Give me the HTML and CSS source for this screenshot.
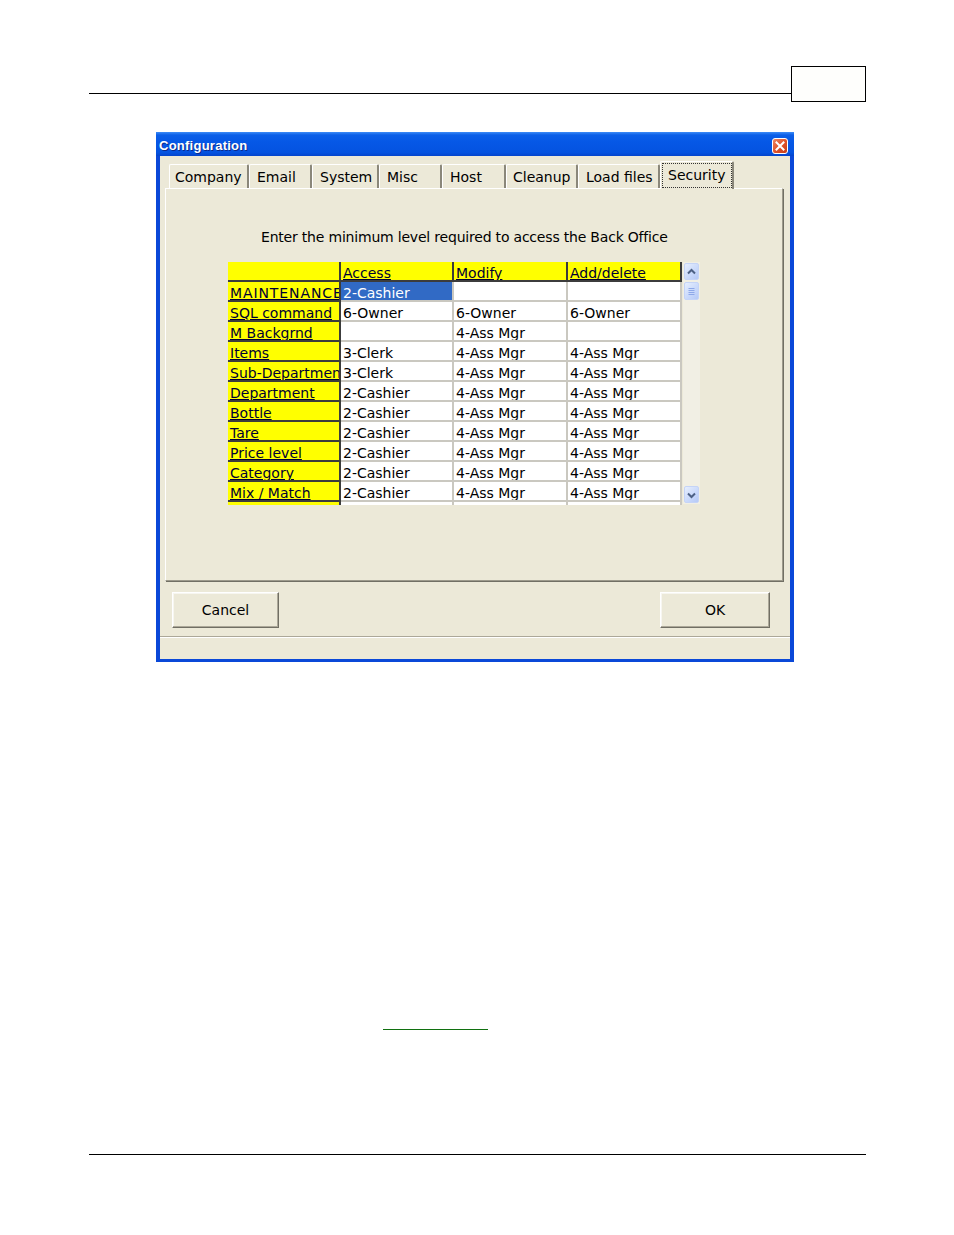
FILE: index.html
```html
<!DOCTYPE html>
<html>
<head>
<meta charset="utf-8">
<title>Configuration</title>
<link rel="stylesheet" href="styles.css">
</head>
<body>
<div class="page">
  <header class="doc-head">
    <div class="head-line"></div>
    <div class="head-box"></div>
  </header>

  <div class="dialog">
    <div class="titlebar">
      <span class="title">Configuration</span>
      <span class="close">
        <svg width="16" height="16" viewBox="0 0 16 16">
          <defs>
            <linearGradient id="cg" x1="0" y1="0" x2="1" y2="1">
              <stop offset="0" stop-color="#f08a66"/>
              <stop offset="0.5" stop-color="#e0542c"/>
              <stop offset="1" stop-color="#c23b16"/>
            </linearGradient>
          </defs>
          <rect x="0.5" y="0.5" width="15" height="15" rx="2.5" fill="url(#cg)" stroke="#fff"/>
          <path d="M4.5 4.5l7 7M11.5 4.5l-7 7" stroke="#fff" stroke-width="2" stroke-linecap="square"/>
        </svg>
      </span>
    </div>

    <div class="dlg-body">
      <div class="tabs">
        <div class="tab">Company</div>
        <div class="tab">Email</div>
        <div class="tab">System</div>
        <div class="tab">Misc</div>
        <div class="tab">Host</div>
        <div class="tab">Cleanup</div>
        <div class="tab">Load files</div>
        <div class="tab tab-active"><span class="focus">Security</span></div>
      </div>

      <div class="panel">
        <p class="prompt">Enter the minimum level required to access the Back Office</p>
        <div class="grid-wrap">
          <div class="grid">
            <div class="c fix"></div>
            <div class="c fix"><u>Access</u></div>
            <div class="c fix"><u>Modify</u></div>
            <div class="c fix"><u>Add/delete</u></div>

            <div class="c fix"><u class="wide">MAINTENANCE</u></div>
            <div class="c sel">2-Cashier</div>
            <div class="c"></div>
            <div class="c"></div>

            <div class="c fix"><u>SQL command</u></div>
            <div class="c">6-Owner</div>
            <div class="c">6-Owner</div>
            <div class="c">6-Owner</div>

            <div class="c fix"><u>M Backgrnd</u></div>
            <div class="c"></div>
            <div class="c">4-Ass Mgr</div>
            <div class="c"></div>

            <div class="c fix"><u>Items</u></div>
            <div class="c">3-Clerk</div>
            <div class="c">4-Ass Mgr</div>
            <div class="c">4-Ass Mgr</div>

            <div class="c fix"><u>Sub-Department</u></div>
            <div class="c">3-Clerk</div>
            <div class="c">4-Ass Mgr</div>
            <div class="c">4-Ass Mgr</div>

            <div class="c fix"><u>Department</u></div>
            <div class="c">2-Cashier</div>
            <div class="c">4-Ass Mgr</div>
            <div class="c">4-Ass Mgr</div>

            <div class="c fix"><u>Bottle</u></div>
            <div class="c">2-Cashier</div>
            <div class="c">4-Ass Mgr</div>
            <div class="c">4-Ass Mgr</div>

            <div class="c fix"><u>Tare</u></div>
            <div class="c">2-Cashier</div>
            <div class="c">4-Ass Mgr</div>
            <div class="c">4-Ass Mgr</div>

            <div class="c fix"><u>Price level</u></div>
            <div class="c">2-Cashier</div>
            <div class="c">4-Ass Mgr</div>
            <div class="c">4-Ass Mgr</div>

            <div class="c fix"><u>Category</u></div>
            <div class="c">2-Cashier</div>
            <div class="c">4-Ass Mgr</div>
            <div class="c">4-Ass Mgr</div>

            <div class="c fix"><u>Mix / Match</u></div>
            <div class="c">2-Cashier</div>
            <div class="c">4-Ass Mgr</div>
            <div class="c">4-Ass Mgr</div>

            <div class="c fix"></div>
            <div class="c"></div>
            <div class="c"></div>
            <div class="c"></div>
          </div>

          <div class="scrollbar">
            <div class="sb-btn">
              <svg width="15" height="16" viewBox="0 0 15 16"><path d="M4 9.5l3.5-3.5L11 9.5" fill="none" stroke="#4d6185" stroke-width="2"/></svg>
            </div>
            <div class="sb-thumb">
              <svg width="15" height="17" viewBox="0 0 15 17"><path d="M4.5 5.5h6M4.5 7.5h6M4.5 9.5h6M4.5 11.5h6" stroke="#8ea8e8" stroke-width="1"/></svg>
            </div>
            <div class="sb-btn sb-down">
              <svg width="15" height="16" viewBox="0 0 15 16"><path d="M4 6.5l3.5 3.5L11 6.5" fill="none" stroke="#4d6185" stroke-width="2"/></svg>
            </div>
          </div>
        </div>
      </div>

      <div class="buttons">
        <button class="btn btn-cancel">Cancel</button>
        <button class="btn btn-ok">OK</button>
      </div>
      <div class="separator"></div>
      <div class="status"></div>
    </div>
  </div>

  <div class="link-line"></div>
  <div class="foot-line"></div>
</div>
</body>
</html>
```

FILE: styles.css
```css
* { box-sizing: border-box; }
html, body { margin: 0; padding: 0; background: #fff; }
body {
  font-family: "DejaVu Sans", Verdana, sans-serif;
  font-size: 14px;
  color: #000;
}
.page { padding-top: 66px; height: 1235px; overflow: hidden; }

/* document header */
.doc-head { display: flex; margin-left: 89px; width: 777px; height: 36px; }
.head-line { width: 702px; height: 28px; border-bottom: 1px solid #000; }
.head-box { width: 75px; height: 36px; border: 1px solid #000; background: #fefefc; }

/* dialog */
.dialog {
  margin: 30px 0 0 156px;
  width: 638px;
  height: 530px;
  background: #0747d2;
  border-style: solid;
  border-color: #0a48d8;
  border-width: 0 4px 3px 4px;
  display: flex;
  flex-direction: column;
}
.titlebar {
  height: 24px;
  display: flex;
  align-items: flex-start;
  justify-content: space-between;
  margin: 0 -4px;
  padding: 0 6px 0 3px;
  background: linear-gradient(to bottom, #3d8cf7 0, #0b5fe8 3px, #0658e6 40%, #0453e0 85%, #0445cc 100%);
}
.title {
  margin-top: 6px;
  font-family: "Liberation Sans", Arial, sans-serif;
  font-weight: bold;
  font-size: 13px;
  letter-spacing: 0.25px;
  line-height: 16px;
  color: #fff;
  text-shadow: 1px 1px 0 #0b2a8c;
}
.close { margin-top: 6px; width: 16px; height: 16px; display: block; }
.close svg { display: block; }

.dlg-body {
  flex: 1;
  background: #ece9d8;
  display: flex;
  flex-direction: column;
}

/* tabs */
.tabs {
  height: 32px;
  display: flex;
  align-items: flex-end;
  padding-left: 9px;
}
.tab {
  height: 24px;
  padding: 1px 0 0 7px;
  line-height: 22px;
  white-space: nowrap;
  border-top: 1px solid #fff;
  border-left: 1px solid #fff;
  border-right: 2px solid #8a877a;
  border-radius: 2px 2px 0 0;
  background: #ece9d8;
}
.tab:nth-child(1) { width: 80px; padding-left: 5px; }
.tab:nth-child(2) { width: 63px; }
.tab:nth-child(3) { width: 67px; }
.tab:nth-child(4) { width: 63px; }
.tab:nth-child(5) { width: 64px; }
.tab:nth-child(6) { width: 72px; padding-left: 6px; }
.tab:nth-child(7) { width: 82px; }
.tab-active {
  width: 74px;
  height: 28px;
  padding: 2px 0 0 2px;
  margin-bottom: -1px;
  position: relative;
  z-index: 1;
}
.focus {
  display: inline-block;
  height: 23px;
  line-height: 22px;
  padding: 0 5px;
  outline: 1px dotted #333;
}

/* panel */
.panel {
  margin-left: 5px;
  width: 618px;
  height: 393px;
  border-top: 1px solid #fff;
  border-left: 1px solid #fff;
  border-right: 1px solid #9d9a8c;
  border-bottom: 1px solid #9d9a8c;
  box-shadow: 1px 1px 0 #716f64;
}
.prompt {
  margin: 39px 0 0 95px;
  line-height: 18px;
  letter-spacing: -0.2px;
  white-space: nowrap;
}
.grid-wrap {
  display: flex;
  margin: 16px 0 0 62px;
}
.grid {
  display: grid;
  grid-template-columns: 113px 113px 114px 114px;
  grid-auto-rows: 20px;
  height: 243px;
  overflow: hidden;
}
.c {
  background: #fff;
  border-right: 2px solid #cac8c0;
  border-bottom: 2px solid #cac8c0;
  padding: 3px 0 0 2px;
  line-height: 17px;
  white-space: nowrap;
  overflow: hidden;
  color: #000;
}
.c.fix {
  background: #ffff00;
  border-right-color: #3c3c3c;
  border-bottom-color: #3c3c3c;
  color: #000033;
}
.c.sel { background: #316ac5; color: #fff; }
.wide { letter-spacing: 0.9px; }

.scrollbar {
  width: 17px;
  height: 242px;
  margin-left: 1px;
  padding: 1px;
  background: #f1efe4;
  display: flex;
  flex-direction: column;
}
.sb-btn, .sb-thumb {
  width: 15px;
  height: 17px;
  border: 1px solid #c5d4f7;
  border-radius: 2px;
  background: linear-gradient(135deg, #e6eefd 0%, #c8d8fb 60%, #b5c9f6 100%);
  display: flex;
  align-items: center;
  justify-content: center;
}
.sb-btn svg, .sb-thumb svg { display: block; flex: none; }
.sb-thumb { margin-top: 2px; height: 18px; }
.sb-down { margin-top: auto; }

/* buttons */
.buttons {
  display: flex;
  justify-content: space-between;
  margin-top: 11px;
  padding: 0 20px 0 12px;
}
.btn {
  height: 36px;
  font-family: "DejaVu Sans", Verdana, sans-serif;
  font-size: 14px;
  color: #000;
  background: #ece9d8;
  border: none;
  border-top: 1px solid #fff;
  border-left: 1px solid #fff;
  border-right: 1px solid #716f64;
  border-bottom: 1px solid #716f64;
  box-shadow: inset -1px -1px 0 #aca899, inset 1px 1px 0 #f7f6f0;
  padding: 0;
  margin: 0;
}
.btn-cancel { width: 107px; }
.btn-ok { width: 110px; }

.separator {
  margin-top: 8px;
  height: 2px;
  border-top: 1px solid #aca899;
  border-bottom: 1px solid #fff;
}
.status { flex: 1; }

/* page furniture */
.link-line {
  margin: 367px 0 0 383px;
  width: 105px;
  height: 1px;
  background: #107010;
}
.foot-line {
  margin: 124px 0 0 89px;
  width: 777px;
  height: 1px;
  background: #000;
}
```
